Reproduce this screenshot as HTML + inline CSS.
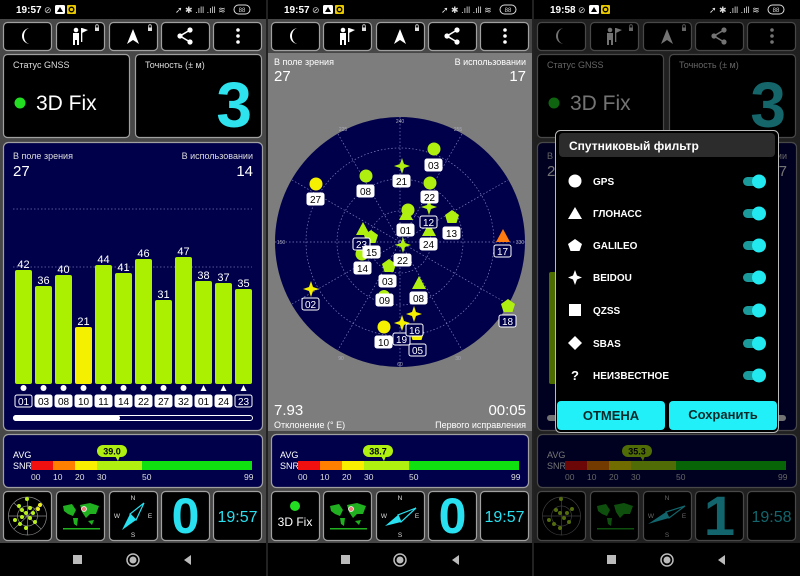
<!DOCTYPE html>
<html><head><meta charset="utf-8"><style>
html,body{margin:0;padding:0;background:#000;width:800px;height:576px;overflow:hidden}
svg{display:block;font-family:"Liberation Sans",sans-serif}
</style></head><body>
<svg width="800" height="576" viewBox="0 0 800 576" xmlns="http://www.w3.org/2000/svg">
<defs>
<g id="moon"><path d="M3,-8 A8,8 0 1 0 3,8 A6,8 0 0 1 3,-8Z" fill="#fff"/></g>
<g id="nav"><path d="M0,-8 L6,7 L0,3 L-6,7Z" fill="#fff"/></g>
<g id="share"><circle cx="5" cy="-6" r="2.6" fill="#fff"/><circle cx="-5" cy="0" r="2.6" fill="#fff"/><circle cx="5" cy="6" r="2.6" fill="#fff"/><path d="M5,-6 L-5,0 L5,6" stroke="#fff" stroke-width="1.6" fill="none"/></g>
<g id="dots"><circle cx="0" cy="-6" r="1.8" fill="#fff"/><circle cx="0" cy="0" r="1.8" fill="#fff"/><circle cx="0" cy="6" r="1.8" fill="#fff"/></g>
<g id="person"><circle cx="-4" cy="-7" r="2.3" fill="#fff"/><rect x="-7" y="-4" width="6" height="7" fill="#fff"/><rect x="-7" y="3" width="2" height="5" fill="#fff"/><rect x="-3" y="3" width="2" height="5" fill="#fff"/><rect x="1" y="-9" width="1.3" height="14" fill="#fff"/><path d="M2,-9 L8,-7 L2,-4Z" fill="#fff"/></g>
<g id="lock"><rect x="-2" y="-1.5" width="4" height="3.5" fill="#ddd"/><path d="M-1.3,-1.5 V-3 A1.3,1.3 0 0 1 1.3,-3 V-1.5" stroke="#ddd" stroke-width="0.8" fill="none"/></g>
<g id="star"><path d="M0,-8 L2,-2 L8,0 L2,2 L0,8 L-2,2 L-8,0 L-2,-2Z"/></g>
<g id="pent"><path d="M0,-7 L7,-2 L4.5,6 L-4.5,6 L-7,-2Z"/></g>
<g id="tri"><path d="M0,-7 L7,6 L-7,6Z"/></g>
</defs>

<!-- ============ PANEL 1 ============ -->
<g>
<rect x="0" y="0" width="266" height="576" fill="#474747"/>
<rect x="0" y="0" width="266" height="19" fill="#000"/>
<text x="16" y="13" font-size="10" fill="#fff" font-weight="bold">19:57</text>
<text x="44" y="13" font-size="9" fill="#ccc">⊘</text>
<rect x="55" y="5" width="10" height="9" rx="1.5" fill="#fff"/><path d="M57,12 L60,7 L63,12Z" fill="#000"/>
<rect x="67" y="5" width="9" height="9" rx="1" fill="#e8c800"/><circle cx="71.5" cy="9.5" r="2.3" fill="none" stroke="#000" stroke-width="1.3"/>
<text x="175" y="13" font-size="9" fill="#ddd">➚ ✱ .ıll .ıll ≋</text>
<rect x="234" y="5" width="16" height="9" rx="4.5" fill="none" stroke="#ddd" stroke-width="1"/><text x="242" y="12" font-size="6" fill="#ddd" text-anchor="middle">88</text>

<g fill="#000" stroke="#a0a0a0" stroke-width="1.2">
<rect x="3.5" y="22.5" width="48" height="28" rx="4"/><rect x="56.5" y="22.5" width="48" height="28" rx="4"/><rect x="109.5" y="22.5" width="48" height="28" rx="4"/><rect x="161.5" y="22.5" width="48" height="28" rx="4"/><rect x="213.5" y="22.5" width="48" height="28" rx="4"/>
<rect x="3.5" y="54.5" width="126" height="83" rx="4"/><rect x="135.5" y="54.5" width="126" height="83" rx="4"/>
</g>
<use href="#moon" x="27" y="36"/><use href="#person" x="80" y="37"/><use href="#lock" x="97" y="29"/><use href="#nav" x="133" y="37"/><use href="#lock" x="150" y="29"/><use href="#share" x="185" y="36"/><use href="#dots" x="238" y="36"/>
<text x="13" y="68" font-size="9" fill="#ddd">Статус GNSS</text>
<circle cx="20" cy="103" r="5.5" fill="#22dd22"/>
<text x="36" y="110" font-size="21" fill="#fff">3D Fix</text>
<text x="145" y="68" font-size="9" fill="#ddd">Точность (± м)</text>
<text x="252" y="127" font-size="64" font-weight="bold" fill="#2ee3ee" text-anchor="end">3</text>

<rect x="3.5" y="142.5" width="259" height="288" rx="5" fill="#00004a" stroke="#a0a0a0" stroke-width="1.2"/>
<text x="13" y="159" font-size="9" fill="#ddd">В поле зрения</text>
<text x="13" y="176" font-size="15" fill="#fff">27</text>
<text x="253" y="159" font-size="9" fill="#ddd" text-anchor="end">В использовании</text>
<text x="253" y="176" font-size="15" fill="#fff" text-anchor="end">14</text>
<path d="M13,209 H252 M13,267 H252" stroke="#7070b0" stroke-width="0.8" stroke-dasharray="1.5 2"/>
<g fill="#aaf000">
<rect x="15" y="270" width="17" height="114" rx="2"/><rect x="35" y="286" width="17" height="98" rx="2"/><rect x="55" y="275" width="17" height="109" rx="2"/><rect x="75" y="327" width="17" height="57" rx="2" fill="#f5f000"/><rect x="95" y="265" width="17" height="119" rx="2"/><rect x="115" y="273" width="17" height="111" rx="2"/><rect x="135" y="259" width="17" height="125" rx="2"/><rect x="155" y="300" width="17" height="84" rx="2"/><rect x="175" y="257" width="17" height="127" rx="2"/><rect x="195" y="281" width="17" height="103" rx="2"/><rect x="215" y="283" width="17" height="101" rx="2"/><rect x="235" y="289" width="17" height="95" rx="2"/>
</g>
<g font-size="11" fill="#fff" text-anchor="middle">
<text x="23.5" y="268">42</text><text x="43.5" y="284">36</text><text x="63.5" y="273">40</text><text x="83.5" y="325">21</text><text x="103.5" y="263">44</text><text x="123.5" y="271">41</text><text x="143.5" y="257">46</text><text x="163.5" y="298">31</text><text x="183.5" y="255">47</text><text x="203.5" y="279">38</text><text x="223.5" y="281">37</text><text x="243.5" y="287">35</text>
</g>
<g fill="#fff"><circle cx="23.5" cy="388" r="3"/><circle cx="43.5" cy="388" r="3"/><circle cx="63.5" cy="388" r="3"/><circle cx="83.5" cy="388" r="3"/><circle cx="103.5" cy="388" r="3"/><circle cx="123.5" cy="388" r="3"/><circle cx="143.5" cy="388" r="3"/><circle cx="163.5" cy="388" r="3"/><circle cx="183.5" cy="388" r="3"/><path d="M203.5,385 L206.5,391 L200.5,391Z M223.5,385 L226.5,391 L220.5,391Z M243.5,385 L246.5,391 L240.5,391Z"/></g>
<g fill="#fff" stroke="#fff" stroke-width="1"><rect x="15" y="395" width="17" height="12" rx="2" fill="#00004a"/><rect x="35" y="395" width="17" height="12" rx="2"/><rect x="55" y="395" width="17" height="12" rx="2"/><rect x="75" y="395" width="17" height="12" rx="2"/><rect x="95" y="395" width="17" height="12" rx="2"/><rect x="115" y="395" width="17" height="12" rx="2"/><rect x="135" y="395" width="17" height="12" rx="2"/><rect x="155" y="395" width="17" height="12" rx="2"/><rect x="175" y="395" width="17" height="12" rx="2"/><rect x="195" y="395" width="17" height="12" rx="2"/><rect x="215" y="395" width="17" height="12" rx="2"/><rect x="235" y="395" width="17" height="12" rx="2" fill="#00004a"/></g>
<g font-size="10" fill="#000" text-anchor="middle"><text x="23.5" y="405" fill="#fff">01</text><text x="43.5" y="405">03</text><text x="63.5" y="405">08</text><text x="83.5" y="405">10</text><text x="103.5" y="405">11</text><text x="123.5" y="405">14</text><text x="143.5" y="405">22</text><text x="163.5" y="405">27</text><text x="183.5" y="405">32</text><text x="203.5" y="405">01</text><text x="223.5" y="405">24</text><text x="243.5" y="405" fill="#fff">23</text></g>
<rect x="13.5" y="415.5" width="239" height="5" rx="2.5" fill="#00004a" stroke="#fff"/><rect x="13" y="415" width="107" height="6" rx="3" fill="#fff"/>

<rect x="3.5" y="434.5" width="259" height="53" rx="5" fill="#00004a" stroke="#a0a0a0" stroke-width="1.2"/>
<text x="13" y="458" font-size="9" fill="#fff">AVG</text><text x="13" y="469" font-size="9" fill="#fff">SNR</text>
<rect x="31" y="461" width="22" height="9" fill="#f01010"/><rect x="53" y="461" width="22" height="9" fill="#ff8000"/><rect x="75" y="461" width="22" height="9" fill="#f8f000"/><rect x="97" y="461" width="45" height="9" fill="#b0f010"/><rect x="142" y="461" width="110" height="9" fill="#10e010"/>
<g font-size="8.5" fill="#ddd"><text x="31" y="480">00</text><text x="53" y="480">10</text><text x="75" y="480">20</text><text x="97" y="480">30</text><text x="142" y="480">50</text><text x="244" y="480">99</text></g>
<rect x="97" y="445" width="30" height="12" rx="6" fill="#b0f010"/><path d="M115,456 L118,461 L120,456Z" fill="#b0f010"/><text x="112" y="454.5" font-size="9" font-weight="bold" fill="#000" text-anchor="middle">39.0</text>

<g fill="#000" stroke="#a0a0a0" stroke-width="1.2"><rect x="3.5" y="491.5" width="48" height="49" rx="4"/><rect x="56.5" y="491.5" width="48" height="49" rx="4"/><rect x="109.5" y="491.5" width="48" height="49" rx="4"/><rect x="161.5" y="491.5" width="48" height="49" rx="4"/><rect x="213.5" y="491.5" width="48" height="49" rx="4"/></g>
<g stroke="#888" fill="none" stroke-width="0.7"><circle cx="27.5" cy="516" r="19"/><circle cx="27.5" cy="516" r="10"/><path d="M8.5,516 H46.5 M27.5,497 V535 M14,503 L41,529 M41,503 L14,529"/></g>
<g fill="#b8f020"><circle cx="27" cy="499" r="2"/><circle cx="22" cy="510" r="2"/><circle cx="26" cy="513" r="2"/><circle cx="30" cy="518" r="2"/><circle cx="33" cy="513" r="2"/><circle cx="38" cy="509" r="2" fill="#f0f020"/><circle cx="40" cy="505" r="2" fill="#f0f020"/><circle cx="15" cy="520" r="2"/><circle cx="20" cy="524" r="2"/><circle cx="26" cy="528" r="2"/><circle cx="35" cy="522" r="2"/><circle cx="22" cy="517" r="2"/><circle cx="30" cy="508" r="2"/><circle cx="19" cy="506" r="2"/></g>
<g fill="#20b020"><path d="M63,506 L72,504 L76,510 L73,516 L68,514 L64,511Z M73,518 L78,518 L77,526 L74,524Z M80,505 L90,503 L99,506 L96,514 L90,514 L86,518 L82,512Z M88,521 L94,520 L92,525Z"/><rect x="63" y="528" width="37" height="1.5"/></g>
<circle cx="84" cy="509" r="2.5" fill="#f08080" stroke="#fff" stroke-width="0.7"/>
<g font-size="6.5" fill="#ddd" text-anchor="middle"><text x="133" y="500">N</text><text x="133" y="537">S</text><text x="117" y="518">W</text><text x="150" y="518">E</text></g>
<path d="M122,530 L130,514 L136,520Z" fill="#28e0f0"/><path d="M144,503 L130,514 L136,520Z" fill="none" stroke="#28e0f0" stroke-width="1.2"/>
<text x="185.5" y="533" font-size="50" font-weight="bold" fill="#28e0f0" text-anchor="middle">0</text>
<text x="237.5" y="522" font-size="16" fill="#28e0f0" text-anchor="middle">19:57</text>
<rect x="0" y="543" width="266" height="33" fill="#000"/>
<rect x="73" y="555" width="9" height="9" fill="#bbb"/><circle cx="133" cy="560" r="6" fill="none" stroke="#bbb" stroke-width="1.5"/><circle cx="133" cy="560" r="3.5" fill="#bbb"/><path d="M191,555 L191,565 L184,560Z" fill="#bbb"/>
</g>

<!-- ============ PANEL 2 ============ -->
<g transform="translate(268,0)">
<rect x="0" y="0" width="264" height="576" fill="#474747"/>
<rect x="0" y="0" width="264" height="19" fill="#000"/>
<text x="16" y="13" font-size="10" fill="#fff" font-weight="bold">19:57</text>
<text x="44" y="13" font-size="9" fill="#ccc">⊘</text>
<rect x="55" y="5" width="10" height="9" rx="1.5" fill="#fff"/><path d="M57,12 L60,7 L63,12Z" fill="#000"/>
<rect x="67" y="5" width="9" height="9" rx="1" fill="#e8c800"/><circle cx="71.5" cy="9.5" r="2.3" fill="none" stroke="#000" stroke-width="1.3"/>
<text x="173" y="13" font-size="9" fill="#ddd">➚ ✱ .ıll .ıll ≋</text>
<rect x="232" y="5" width="16" height="9" rx="4.5" fill="none" stroke="#ddd"/><text x="240" y="12" font-size="6" fill="#ddd" text-anchor="middle">88</text>
<g fill="#000" stroke="#a0a0a0" stroke-width="1.2">
<rect x="3.5" y="22.5" width="48" height="28" rx="4"/><rect x="55.5" y="22.5" width="48" height="28" rx="4"/><rect x="108.5" y="22.5" width="48" height="28" rx="4"/><rect x="160.5" y="22.5" width="48" height="28" rx="4"/><rect x="212.5" y="22.5" width="48" height="28" rx="4"/></g>
<use href="#moon" x="27" y="36"/><use href="#person" x="79" y="37"/><use href="#lock" x="96" y="29"/><use href="#nav" x="132" y="37"/><use href="#lock" x="149" y="29"/><use href="#share" x="184" y="36"/><use href="#dots" x="237" y="36"/>
<rect x="0" y="53" width="264" height="378" fill="#7d7d7d"/>
<text x="6" y="65" font-size="9" fill="#fff">В поле зрения</text>
<text x="6" y="81" font-size="15" fill="#fff">27</text>
<text x="258" y="65" font-size="9" fill="#fff" text-anchor="end">В использовании</text>
<text x="258" y="81" font-size="15" fill="#fff" text-anchor="end">17</text>
<circle cx="132" cy="242" r="125" fill="#00004a"/>
<g stroke="#8080c0" stroke-width="0.7" fill="none" stroke-dasharray="1.5 2"><circle cx="132" cy="242" r="94"/><circle cx="132" cy="242" r="63"/><circle cx="132" cy="242" r="31"/>
<path d="M7,242 H257 M132,117 V367 M24,180 L240,304 M24,304 L240,180 M70,134 L194,350 M194,134 L70,350"/></g>
<g font-size="5" fill="#aab" text-anchor="middle"><text x="132" y="123">240</text><text x="132" y="366">60</text><text x="13" y="244">150</text><text x="252" y="244">330</text><text x="190" y="131">255</text><text x="75" y="131">225</text><text x="73" y="360">90</text><text x="190" y="360">30</text></g>
<g fill="#b0f010">
<circle cx="166" cy="149" r="6.5"/><use href="#star" x="134" y="166"/><circle cx="98" cy="176" r="6.5"/><circle cx="48" cy="184" r="6.5" fill="#f5f000"/><circle cx="162" cy="183" r="6.5"/><use href="#star" x="161" y="207"/><circle cx="140" cy="210" r="6.5"/><use href="#tri" x="138" y="214"/><use href="#pent" x="184" y="217"/><use href="#tri" x="161" y="230"/><use href="#tri" x="235" y="236" fill="#ff7a10"/><use href="#tri" x="95" y="229"/><use href="#pent" x="103" y="237"/><use href="#star" x="135" y="245"/><circle cx="94" cy="254" r="6.5"/><use href="#pent" x="121" y="266"/><use href="#tri" x="151" y="283"/><circle cx="116" cy="296" r="6"/><use href="#star" x="43" y="289" fill="#f5f000"/><use href="#pent" x="240" y="306"/><circle cx="116" cy="327" r="6.5" fill="#f5f000"/><use href="#star" x="134" y="323" fill="#f5f000"/><use href="#star" x="146" y="314" fill="#f5f000"/><use href="#pent" x="149" y="334" fill="#f5f000"/>
</g>
<g fill="#fff" stroke="#fff"><rect x="157" y="159" width="17" height="12" rx="2"/><rect x="125" y="175" width="17" height="12" rx="2"/><rect x="89" y="185" width="17" height="12" rx="2"/><rect x="39" y="193" width="17" height="12" rx="2"/><rect x="153" y="191" width="17" height="12" rx="2"/><rect x="152" y="216" width="17" height="12" rx="2" fill="#00004a"/><rect x="129" y="224" width="17" height="12" rx="2"/><rect x="175" y="227" width="17" height="12" rx="2"/><rect x="152" y="238" width="17" height="12" rx="2"/><rect x="226" y="245" width="17" height="12" rx="2" fill="#00004a"/><rect x="85" y="238" width="17" height="12" rx="2" fill="#00004a"/><rect x="95" y="246" width="17" height="12" rx="2"/><rect x="126" y="254" width="17" height="12" rx="2"/><rect x="86" y="262" width="17" height="12" rx="2"/><rect x="111" y="275" width="17" height="12" rx="2"/><rect x="142" y="292" width="17" height="12" rx="2"/><rect x="108" y="294" width="17" height="12" rx="2"/><rect x="34" y="298" width="17" height="12" rx="2" fill="#00004a"/><rect x="231" y="315" width="17" height="12" rx="2" fill="#00004a"/><rect x="107" y="336" width="17" height="12" rx="2"/><rect x="125" y="333" width="17" height="12" rx="2" fill="#00004a"/><rect x="138" y="324" width="17" height="12" rx="2" fill="#00004a"/><rect x="141" y="344" width="17" height="12" rx="2" fill="#00004a"/></g>
<g font-size="10" fill="#000" text-anchor="middle"><text x="165.5" y="169">03</text><text x="133.5" y="185">21</text><text x="97.5" y="195">08</text><text x="47.5" y="203">27</text><text x="161.5" y="201">22</text><text x="160.5" y="226" fill="#fff">12</text><text x="137.5" y="234">01</text><text x="183.5" y="237">13</text><text x="160.5" y="248">24</text><text x="234.5" y="255" fill="#fff">17</text><text x="93.5" y="248" fill="#fff">23</text><text x="103.5" y="256">15</text><text x="134.5" y="264">22</text><text x="94.5" y="272">14</text><text x="119.5" y="285">03</text><text x="150.5" y="302">08</text><text x="116.5" y="304">09</text><text x="42.5" y="308" fill="#fff">02</text><text x="239.5" y="325" fill="#fff">18</text><text x="115.5" y="346">10</text><text x="133.5" y="343" fill="#fff">19</text><text x="146.5" y="334" fill="#fff">16</text><text x="149.5" y="354" fill="#fff">05</text></g>
<text x="6" y="415" font-size="15" fill="#fff">7.93</text>
<text x="6" y="428" font-size="9" fill="#fff">Отклонение (° E)</text>
<text x="258" y="415" font-size="15" fill="#fff" text-anchor="end">00:05</text>
<text x="258" y="428" font-size="9" fill="#fff" text-anchor="end">Первого исправления</text>

<rect x="3.5" y="434.5" width="257" height="53" rx="5" fill="#00004a" stroke="#a0a0a0" stroke-width="1.2"/>
<text x="12" y="458" font-size="9" fill="#fff">AVG</text><text x="12" y="469" font-size="9" fill="#fff">SNR</text>
<rect x="30" y="461" width="22" height="9" fill="#f01010"/><rect x="52" y="461" width="22" height="9" fill="#ff8000"/><rect x="74" y="461" width="22" height="9" fill="#f8f000"/><rect x="96" y="461" width="45" height="9" fill="#b0f010"/><rect x="141" y="461" width="110" height="9" fill="#10e010"/>
<g font-size="8.5" fill="#ddd"><text x="30" y="480">00</text><text x="52" y="480">10</text><text x="74" y="480">20</text><text x="96" y="480">30</text><text x="141" y="480">50</text><text x="243" y="480">99</text></g>
<rect x="95" y="445" width="30" height="12" rx="6" fill="#b0f010"/><path d="M113,456 L116,461 L118,456Z" fill="#b0f010"/><text x="110" y="454.5" font-size="9" font-weight="bold" fill="#000" text-anchor="middle">38.7</text>
<g fill="#000" stroke="#a0a0a0" stroke-width="1.2"><rect x="3.5" y="491.5" width="48" height="49" rx="4"/><rect x="55.5" y="491.5" width="48" height="49" rx="4"/><rect x="108.5" y="491.5" width="48" height="49" rx="4"/><rect x="160.5" y="491.5" width="48" height="49" rx="4"/><rect x="212.5" y="491.5" width="48" height="49" rx="4"/></g>
<circle cx="27" cy="506" r="5" fill="#22dd22"/><text x="27" y="526" font-size="12" fill="#fff" text-anchor="middle">3D Fix</text>
<g fill="#20b020"><path d="M62,506 L71,504 L75,510 L72,516 L67,514 L63,511Z M72,518 L77,518 L76,526 L73,524Z M79,505 L89,503 L98,506 L95,514 L89,514 L85,518 L81,512Z M87,521 L93,520 L91,525Z"/><rect x="62" y="528" width="37" height="1.5"/></g>
<circle cx="83" cy="509" r="2.5" fill="#f08080" stroke="#fff" stroke-width="0.7"/>
<g font-size="6.5" fill="#ddd" text-anchor="middle"><text x="132" y="500">N</text><text x="132" y="537">S</text><text x="116" y="518">W</text><text x="149" y="518">E</text></g>
<path d="M117,526 L130,515 L133,522Z" fill="#28e0f0"/><path d="M148,508 L130,515 L133,522Z" fill="none" stroke="#28e0f0" stroke-width="1.2"/>
<text x="184.5" y="533" font-size="50" font-weight="bold" fill="#28e0f0" text-anchor="middle">0</text>
<text x="236.5" y="522" font-size="16" fill="#28e0f0" text-anchor="middle">19:57</text>
<rect x="0" y="543" width="264" height="33" fill="#000"/>
<rect x="73" y="555" width="9" height="9" fill="#bbb"/><circle cx="132" cy="560" r="6" fill="none" stroke="#bbb" stroke-width="1.5"/><circle cx="132" cy="560" r="3.5" fill="#bbb"/><path d="M191,555 L191,565 L184,560Z" fill="#bbb"/>
</g>

<!-- ============ PANEL 3 ============ -->
<g transform="translate(534,0)">
<rect x="0" y="0" width="266" height="576" fill="#474747"/>
<rect x="0" y="0" width="266" height="19" fill="#000"/>
<text x="16" y="13" font-size="10" fill="#fff" font-weight="bold">19:58</text>
<text x="44" y="13" font-size="9" fill="#ccc">⊘</text>
<rect x="55" y="5" width="10" height="9" rx="1.5" fill="#fff"/><path d="M57,12 L60,7 L63,12Z" fill="#000"/>
<rect x="67" y="5" width="9" height="9" rx="1" fill="#e8c800"/><circle cx="71.5" cy="9.5" r="2.3" fill="none" stroke="#000" stroke-width="1.3"/>
<text x="175" y="13" font-size="9" fill="#ddd">➚ ✱ .ıll .ıll ≋</text>
<rect x="234" y="5" width="16" height="9" rx="4.5" fill="none" stroke="#ddd"/><text x="242" y="12" font-size="6" fill="#ddd" text-anchor="middle">88</text>
<g fill="#000" stroke="#a0a0a0" stroke-width="1.2">
<rect x="3.5" y="22.5" width="48" height="28" rx="4"/><rect x="56.5" y="22.5" width="48" height="28" rx="4"/><rect x="109.5" y="22.5" width="48" height="28" rx="4"/><rect x="161.5" y="22.5" width="48" height="28" rx="4"/><rect x="213.5" y="22.5" width="48" height="28" rx="4"/>
<rect x="3.5" y="54.5" width="126" height="83" rx="4"/><rect x="135.5" y="54.5" width="126" height="83" rx="4"/></g>
<use href="#moon" x="27" y="36"/><use href="#person" x="80" y="37"/><use href="#lock" x="97" y="29"/><use href="#nav" x="133" y="37"/><use href="#lock" x="150" y="29"/><use href="#share" x="185" y="36"/><use href="#dots" x="238" y="36"/>
<text x="13" y="68" font-size="9" fill="#ddd">Статус GNSS</text>
<circle cx="20" cy="103" r="5.5" fill="#22dd22"/>
<text x="36" y="110" font-size="21" fill="#fff">3D Fix</text>
<text x="145" y="68" font-size="9" fill="#ddd">Точность (± м)</text>
<text x="252" y="127" font-size="64" font-weight="bold" fill="#2ee3ee" text-anchor="end">3</text>
<rect x="3.5" y="142.5" width="259" height="288" rx="5" fill="#00004a" stroke="#a0a0a0" stroke-width="1.2"/>
<text x="13" y="159" font-size="9" fill="#ddd">В поле зрения</text><text x="13" y="176" font-size="15" fill="#fff">27</text>
<text x="253" y="159" font-size="9" fill="#ddd" text-anchor="end">В использовании</text><text x="253" y="176" font-size="15" fill="#fff" text-anchor="end">17</text>
<g fill="#aaf000"><rect x="15" y="272" width="17" height="112" rx="2"/><rect x="215" y="272" width="17" height="112" rx="2"/></g>
<rect x="13" y="415" width="239" height="6" rx="3" fill="#fff"/>
<rect x="3.5" y="434.5" width="259" height="53" rx="5" fill="#00004a" stroke="#a0a0a0" stroke-width="1.2"/>
<text x="13" y="458" font-size="9" fill="#fff">AVG</text><text x="13" y="469" font-size="9" fill="#fff">SNR</text>
<rect x="31" y="461" width="22" height="9" fill="#f01010"/><rect x="53" y="461" width="22" height="9" fill="#ff8000"/><rect x="75" y="461" width="22" height="9" fill="#f8f000"/><rect x="97" y="461" width="45" height="9" fill="#b0f010"/><rect x="142" y="461" width="110" height="9" fill="#10e010"/>
<g font-size="8.5" fill="#ddd"><text x="31" y="480">00</text><text x="53" y="480">10</text><text x="75" y="480">20</text><text x="97" y="480">30</text><text x="142" y="480">50</text><text x="244" y="480">99</text></g>
<rect x="88" y="445" width="30" height="12" rx="6" fill="#b0f010"/><path d="M106,456 L109,461 L111,456Z" fill="#b0f010"/><text x="103" y="454.5" font-size="9" font-weight="bold" fill="#000" text-anchor="middle">35.3</text>
<g fill="#000" stroke="#a0a0a0" stroke-width="1.2"><rect x="3.5" y="491.5" width="48" height="49" rx="4"/><rect x="56.5" y="491.5" width="48" height="49" rx="4"/><rect x="109.5" y="491.5" width="48" height="49" rx="4"/><rect x="161.5" y="491.5" width="48" height="49" rx="4"/><rect x="213.5" y="491.5" width="48" height="49" rx="4"/></g>
<g stroke="#888" fill="none" stroke-width="0.7"><circle cx="27.5" cy="516" r="19"/><circle cx="27.5" cy="516" r="10"/><path d="M8.5,516 H46.5 M27.5,497 V535"/></g>
<g fill="#b8f020"><circle cx="27" cy="499" r="2"/><circle cx="22" cy="510" r="2"/><circle cx="26" cy="513" r="2"/><circle cx="30" cy="518" r="2"/><circle cx="33" cy="513" r="2"/><circle cx="38" cy="509" r="2"/><circle cx="15" cy="520" r="2"/><circle cx="20" cy="524" r="2"/><circle cx="26" cy="528" r="2"/><circle cx="35" cy="522" r="2"/></g>
<g fill="#20b020"><path d="M63,506 L72,504 L76,510 L73,516 L68,514 L64,511Z M73,518 L78,518 L77,526 L74,524Z M80,505 L90,503 L99,506 L96,514 L90,514 L86,518 L82,512Z"/><rect x="63" y="528" width="37" height="1.5"/></g>
<g font-size="6.5" fill="#ddd" text-anchor="middle"><text x="133" y="500">N</text><text x="133" y="537">S</text><text x="117" y="518">W</text><text x="150" y="518">E</text></g>
<path d="M114,524 L132,512 L135,518Z" fill="#28e0f0"/><path d="M151,506 L132,512 L135,518Z" fill="none" stroke="#28e0f0" stroke-width="1.2"/>
<text x="185.5" y="535" font-size="56" font-weight="bold" fill="#28e0f0" text-anchor="middle">1</text>
<text x="237.5" y="522" font-size="16" fill="#28e0f0" text-anchor="middle">19:58</text>
<rect x="0" y="19" width="266" height="524" fill="#000" fill-opacity="0.55"/>
<rect x="0" y="543" width="266" height="33" fill="#000"/>
<rect x="73" y="555" width="9" height="9" fill="#bbb"/><circle cx="133" cy="560" r="6" fill="none" stroke="#bbb" stroke-width="1.5"/><circle cx="133" cy="560" r="3.5" fill="#bbb"/><path d="M191,555 L191,565 L184,560Z" fill="#bbb"/>

<!-- dialog -->
<rect x="21.5" y="130.5" width="223" height="302" rx="5" fill="#000" stroke="#bbb" stroke-width="1"/>
<rect x="25" y="133" width="216" height="24" rx="4" fill="#2c2c2c"/>
<text x="35" y="150" font-size="12" font-weight="bold" fill="#fff">Спутниковый фильтр</text>
<g fill="#fff">
<circle cx="41" cy="181" r="6.5"/>
<path d="M41,207 L48,219 L34,219Z"/>
<path d="M41,239 L48,244 L45.5,251 L36.5,251 L34,244Z"/>
<path d="M41,270 L43,275.5 L48,277.5 L43,279.5 L41,285 L39,279.5 L34,277.5 L39,275.5Z"/>
<rect x="35" y="304" width="12" height="12"/>
<path d="M41,336 L48,343 L41,350 L34,343Z"/>
</g>
<text x="41" y="380" font-size="13" font-weight="bold" fill="#fff" text-anchor="middle">?</text>
<g font-size="10" font-weight="bold" fill="#fff">
<text x="59" y="185">GPS</text><text x="59" y="217">ГЛОНАСС</text><text x="59" y="249">GALILEO</text><text x="59" y="281">BEIDOU</text><text x="59" y="314">QZSS</text><text x="59" y="347">SBAS</text><text x="59" y="379">НЕИЗВЕСТНОЕ</text>
</g>
<g fill="#1a9a9a"><rect x="209" y="177" width="22" height="9" rx="4.5"/><rect x="209" y="209" width="22" height="9" rx="4.5"/><rect x="209" y="241" width="22" height="9" rx="4.5"/><rect x="209" y="273" width="22" height="9" rx="4.5"/><rect x="209" y="306" width="22" height="9" rx="4.5"/><rect x="209" y="339" width="22" height="9" rx="4.5"/><rect x="209" y="371" width="22" height="9" rx="4.5"/></g>
<g fill="#22e8f0"><circle cx="225" cy="181.5" r="7"/><circle cx="225" cy="213.5" r="7"/><circle cx="225" cy="245.5" r="7"/><circle cx="225" cy="277.5" r="7"/><circle cx="225" cy="310.5" r="7"/><circle cx="225" cy="343.5" r="7"/><circle cx="225" cy="375.5" r="7"/></g>
<rect x="23" y="401" width="108" height="29" rx="4" fill="#22f0f8"/><rect x="135" y="401" width="108" height="29" rx="4" fill="#22f0f8"/>
<text x="77" y="420" font-size="13" font-weight="bold" fill="#0a2a2a" text-anchor="middle">ОТМЕНА</text>
<text x="189" y="419" font-size="13" font-weight="bold" fill="#0a2a2a" text-anchor="middle">Сохранить</text>
</g>
<rect x="266" y="0" width="2" height="576" fill="#222"/><rect x="532" y="0" width="2" height="576" fill="#222"/>
</svg>
</body></html>
